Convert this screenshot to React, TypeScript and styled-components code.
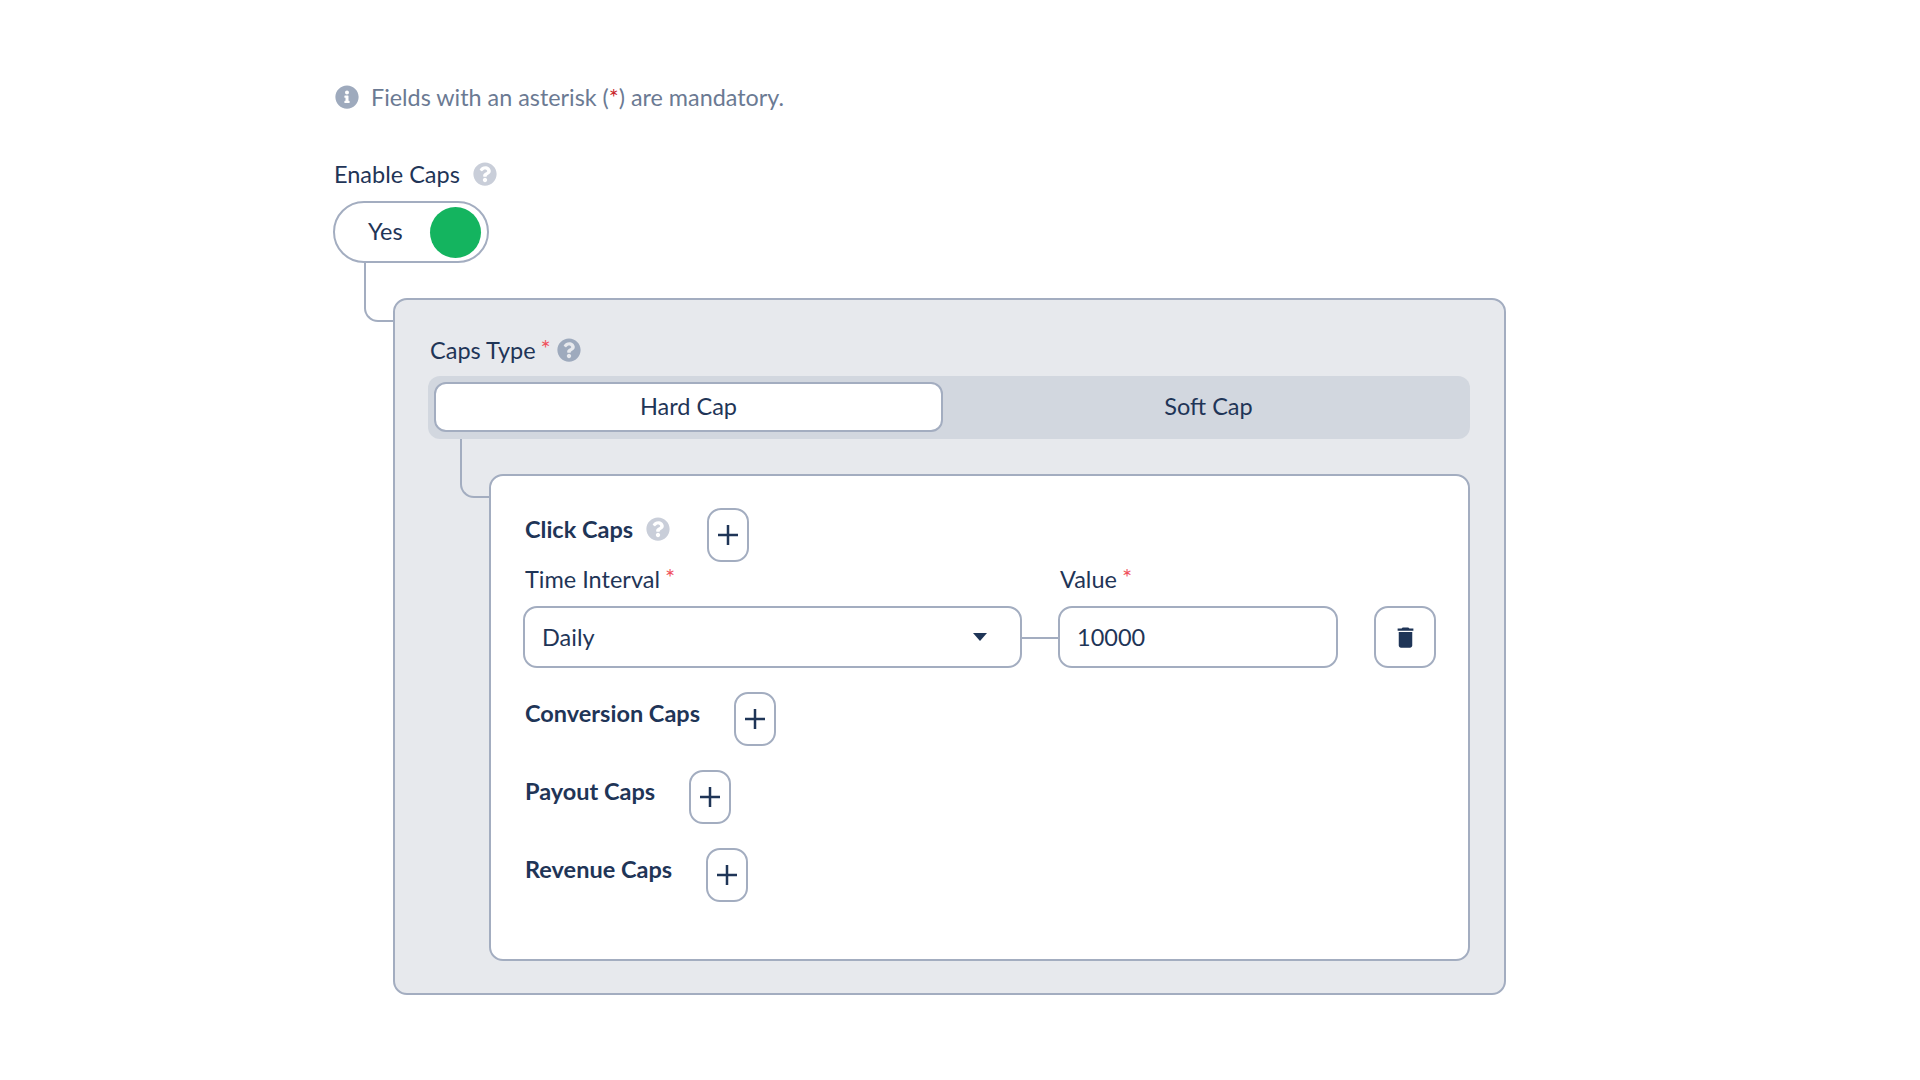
import React from 'react';
import styled, { createGlobalStyle } from 'styled-components';
import { FaInfoCircle, FaQuestionCircle } from 'react-icons/fa';
import { MdDelete } from 'react-icons/md';

const navy = '#1f3557';
const slate = '#9eaabd';
const line = '#a3adc0';

const GlobalStyle = createGlobalStyle`
  html, body { margin: 0; padding: 0; background: #fff; }
  body {
    font-family: Lato, "Open Sans", sans-serif;
    font-size: 23.5px;
    color: ${navy};
  }
  * { box-sizing: border-box; }
`;

const Page = styled.div`
  width: 1920px;
  height: 1080px;
  padding: 85px 0 0 333px;
  overflow: hidden;
`;

const Note = styled.div`
  display: flex;
  align-items: center;
  gap: 12px;
  height: 24px;
  line-height: 22px;
  padding-left: 2px;
  color: #6b7a93;
  font-size: 23.35px;
  margin-bottom: 53px;
  svg { color: ${slate}; flex: none; }
`;

const NoteStar = styled.span`
  color: #c9252d;
`;

const LabelRow = styled.div<{ $bold?: boolean }>`
  display: flex;
  align-items: center;
  height: 24px;
  line-height: 24px;
  font-weight: ${p => (p.$bold ? 700 : 400)};
  white-space: nowrap;
`;

const TopLabel = styled(LabelRow)`
  padding-left: 1px;
  margin-bottom: 15px;
  gap: 13px;
`;

const Hint = styled(FaQuestionCircle)<{ $dark?: boolean }>`
  color: ${p => (p.$dark ? slate : '#c9ced9')};
  flex: none;
`;

const Star = styled.span`
  color: #f0525d;
  font-size: 24px;
  margin-left: 5px;
  position: relative;
  top: -2px;
`;

const Toggle = styled.div`
  width: 156px;
  height: 62px;
  border: 2px solid ${line};
  border-radius: 31px;
  padding: 0 6px 2px 33px;
  display: flex;
  align-items: center;
  justify-content: space-between;
  margin-bottom: 35px;
`;

const Knob = styled.span`
  width: 51px;
  height: 51px;
  border-radius: 50%;
  background: #14b45f;
  margin-top: 2px;
`;

const Branch = styled.div<{ $indent: number; $rise: number }>`
  position: relative;
  margin-left: ${p => p.$indent}px;
  &::before {
    content: '';
    position: absolute;
    left: -29px;
    top: ${p => -p.$rise}px;
    width: 29px;
    height: ${p => p.$rise + 22}px;
    border-left: 2px solid ${line};
    border-bottom: 2px solid ${line};
    border-bottom-left-radius: 14px;
  }
`;

const GrayPanel = styled.div`
  width: 1113px;
  height: 697px;
  background: #e7e9ed;
  border: 2px solid ${line};
  border-radius: 14px;
  padding: 38px 33px 0;
`;

const CapsLabel = styled(LabelRow)`
  padding-left: 2px;
  margin-bottom: 14px;
`;

const HintGap = styled.span`
  width: 6px;
`;

const Segments = styled.div`
  display: flex;
  width: 1042px;
  height: 63px;
  background: #d2d7df;
  border-radius: 12px;
  padding: 6px 0 7px 6px;
  margin-bottom: 35px;
`;

const Segment = styled.div<{ $active?: boolean }>`
  display: flex;
  align-items: center;
  justify-content: center;
  width: ${p => (p.$active ? '509px' : 'auto')};
  flex: ${p => (p.$active ? 'none' : 1)};
  padding: 0 0 2px ${p => (p.$active ? 0 : 4)}px;
  background: ${p => (p.$active ? '#fff' : 'transparent')};
  border: ${p => (p.$active ? `2px solid ${line}` : 'none')};
  border-radius: 12px;
`;

const WhitePanel = styled.div`
  width: 981px;
  height: 487px;
  background: #fff;
  border: 2px solid ${line};
  border-radius: 14px;
  padding: 32px 33px 0 34px;
`;

const CapRow = styled.div<{ $gap: number }>`
  display: flex;
  align-items: flex-start;
  gap: ${p => p.$gap}px;
  height: 54px;
  margin-bottom: 24px;
`;

const CapTitle = styled(LabelRow)`
  gap: 13px;
  margin-top: 9px;
`;

const SquareButton = styled.button<{ $wide?: boolean }>`
  width: ${p => (p.$wide ? '62px' : '42px')};
  height: ${p => (p.$wide ? '62px' : '54px')};
  padding: 0;
  background: #fff;
  border: 2px solid ${line};
  border-radius: 14px;
  color: ${navy};
  display: flex;
  align-items: center;
  justify-content: center;
  flex: none;
`;

const Fields = styled.div`
  display: flex;
  align-items: flex-end;
  margin: -19px 0 24px -2px;
`;

const Field = styled.div<{ $width: number }>`
  width: ${p => p.$width}px;
  flex: none;
`;

const FieldLabel = styled(LabelRow)`
  padding-left: 2px;
  margin-bottom: 15px;
`;

const Control = styled.div<{ $tail?: number }>`
  height: 62px;
  border: 2px solid ${line};
  border-radius: 14px;
  background: #fff;
  padding: 0 ${p => p.$tail ?? 17}px 0 17px;
  display: flex;
  align-items: center;
  justify-content: space-between;
`;

const Link = styled.span`
  width: 36px;
  height: 2px;
  background: ${line};
  margin-bottom: 29px;
  flex: none;
`;

const TrashSlot = styled.div`
  margin-left: 36px;
`;

const Plus = () => (
  <svg width="20" height="20" viewBox="0 0 20 20">
    <path d="M10 0v20M0 10h20" stroke="currentColor" strokeWidth="2.5" fill="none" />
  </svg>
);

const Caret = () => (
  <svg width="14" height="8" viewBox="0 0 14 8">
    <path d="M0 0h14L7 8z" fill={navy} />
  </svg>
);

const App = () => (
  <Page>
    <GlobalStyle />
    <Note>
      <FaInfoCircle size={24} />
      <span>Fields with an asterisk (<NoteStar>*</NoteStar>) are mandatory.</span>
    </Note>
    <TopLabel>
      Enable Caps
      <Hint size={24} />
    </TopLabel>
    <Toggle>
      Yes
      <Knob />
    </Toggle>
    <Branch $indent={60} $rise={35}>
      <GrayPanel>
        <CapsLabel>
          Caps Type<Star>*</Star>
          <HintGap />
          <Hint size={24} $dark />
        </CapsLabel>
        <Segments>
          <Segment $active>Hard Cap</Segment>
          <Segment>Soft Cap</Segment>
        </Segments>
        <Branch $indent={61} $rise={35}>
          <WhitePanel>
            <CapRow $gap={37}>
              <CapTitle $bold>
                Click Caps
                <Hint size={24} />
              </CapTitle>
              <SquareButton><Plus /></SquareButton>
            </CapRow>
            <Fields>
              <Field $width={499}>
                <FieldLabel>Time Interval<Star>*</Star></FieldLabel>
                <Control $tail={33}>
                  Daily
                  <Caret />
                </Control>
              </Field>
              <Link />
              <Field $width={280}>
                <FieldLabel>Value<Star>*</Star></FieldLabel>
                <Control>10000</Control>
              </Field>
              <TrashSlot>
                <SquareButton $wide><MdDelete size={27} /></SquareButton>
              </TrashSlot>
            </Fields>
            <CapRow $gap={34}>
              <CapTitle $bold>Conversion Caps</CapTitle>
              <SquareButton><Plus /></SquareButton>
            </CapRow>
            <CapRow $gap={34}>
              <CapTitle $bold>Payout Caps</CapTitle>
              <SquareButton><Plus /></SquareButton>
            </CapRow>
            <CapRow $gap={34}>
              <CapTitle $bold>Revenue Caps</CapTitle>
              <SquareButton><Plus /></SquareButton>
            </CapRow>
          </WhitePanel>
        </Branch>
      </GrayPanel>
    </Branch>
  </Page>
);

export default App;
